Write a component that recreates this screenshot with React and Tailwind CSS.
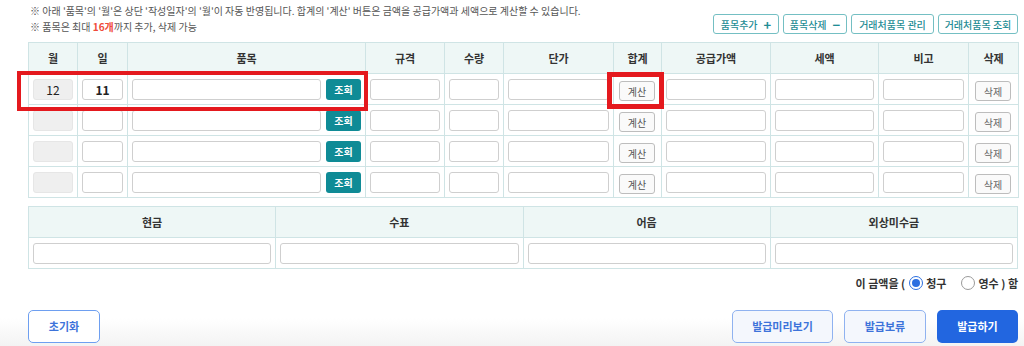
const rows = [
  { month: '12', day: '11' },
  { month: '', day: '' },
  { month: '', day: '' },
  { month: '', day: '' },
]

const headers = ['월', '일', '품목', '규격', '수량', '단가', '합계', '공급가액', '세액', '비고', '삭제']
const widths = [49, 50, 238, 79, 59, 110, 48, 109, 108, 90, 50]

function Input({ className = '', value = '' }) {
  return (
    <div
      className={
        'h-[21px] rounded-[3px] border border-[#cfcfcf] bg-white text-center text-[12px] font-bold leading-[19px] text-[#222] ' +
        className
      }
    >
      {value}
    </div>
  )
}

function TopButton({ children, className = '' }) {
  return (
    <button
      className={
        'flex h-[20px] items-center justify-center gap-[6px] rounded-[3px] border border-[#74bfc3] bg-white text-[10px] font-medium text-[#1f8d95] ' +
        className
      }
    >
      {children}
    </button>
  )
}

export default function App() {
  return (
    <div className="relative h-[346px] w-[1024px] overflow-hidden bg-gradient-to-b from-white from-[92%] to-[#f3f3f3] font-['Noto_Sans_CJK_KR',sans-serif] text-[#333]">
      <div className="pl-[28px] pr-[6px]">
        <div className="flex items-end justify-between pt-[3px]">
          <div className="text-[10px] leading-[16px] text-[#555]">
            <p className="pl-[2px]">
              ※ 아래 '품목'의 '월'은 상단 '작성일자'의 '월'이 자동 반영됩니다. 합계의 '계산' 버튼은 금액을 공급가액과 세액으로 계산할 수 있습니다.
            </p>
            <p className="pl-[2px]">
              ※ 품목은 최대 <span className="font-bold text-[#ef4b3a]">16개</span>까지 추가, 삭제 가능
            </p>
          </div>
          <div className="mb-[1px] flex gap-[4px]">
            <TopButton className="w-[66px]">
              품목추가 <span className="text-[13px] font-bold leading-none">+</span>
            </TopButton>
            <TopButton className="w-[64px]">
              품목삭제 <span className="text-[13px] font-bold leading-none">−</span>
            </TopButton>
            <TopButton className="w-[83px]">거래처품목 관리</TopButton>
            <TopButton className="w-[80px]">거래처품목 조회</TopButton>
          </div>
        </div>

        <table className="mt-[7px] w-[990px] table-fixed border-collapse">
          <colgroup>
            {widths.map((w, i) => (
              <col key={i} style={{ width: w }} />
            ))}
          </colgroup>
          <thead>
            <tr className="h-[31px] bg-[#eef7f6]">
              {headers.map((h) => (
                <th key={h} className="border border-[#cfe4e5] p-0 text-[11px] font-bold text-[#333]">
                  {h}
                </th>
              ))}
            </tr>
          </thead>
          <tbody>
            {rows.map((r, i) => (
              <tr key={i} className="h-[31px]">
                <td className="border border-[#cfe4e5] px-[4px]">
                  <Input className="!border-[#e6e6e6] !bg-[#efefef] font-normal" value={r.month} />
                </td>
                <td className="border border-[#cfe4e5] px-[4px]">
                  <Input value={r.day} />
                </td>
                <td className="border border-[#cfe4e5] px-[4px]">
                  <div className="flex gap-[5px]">
                    <Input className="flex-1" />
                    <button className="h-[21px] w-[35px] rounded-[3px] bg-[#0f8b96] text-[10px] font-bold text-white">
                      조회
                    </button>
                  </div>
                </td>
                <td className="border border-[#cfe4e5] px-[4px]">
                  <Input />
                </td>
                <td className="border border-[#cfe4e5] px-[4px]">
                  <Input />
                </td>
                <td className="border border-[#cfe4e5] px-[4px]">
                  <Input />
                </td>
                <td className="border border-[#cfe4e5] px-[5px]">
                  <button className="h-[20px] w-[36px] rounded-[3px] border border-[#bdbdbd] bg-[#fafafa] text-[10px] text-[#555]">
                    계산
                  </button>
                </td>
                <td className="border border-[#cfe4e5] px-[4px]">
                  <Input />
                </td>
                <td className="border border-[#cfe4e5] px-[4px]">
                  <Input />
                </td>
                <td className="border border-[#cfe4e5] px-[4px]">
                  <Input />
                </td>
                <td className="border border-[#cfe4e5] px-[6px]">
                  <button className="h-[20px] w-[36px] rounded-[3px] border border-[#bdbdbd] bg-[#fafafa] text-[10px] text-[#666]">
                    삭제
                  </button>
                </td>
              </tr>
            ))}
          </tbody>
        </table>

        <table className="mt-[8px] w-[990px] table-fixed border-collapse">
          <thead>
            <tr className="h-[31px] bg-[#eef7f6]">
              {['현금', '수표', '어음', '외상미수금'].map((h) => (
                <th key={h} className="border border-[#cfe4e5] p-0 text-[11px] font-bold text-[#333]">
                  {h}
                </th>
              ))}
            </tr>
          </thead>
          <tbody>
            <tr className="h-[31px]">
              {[0, 1, 2, 3].map((i) => (
                <td key={i} className="border border-[#cfe4e5] px-[4px]">
                  <Input />
                </td>
              ))}
            </tr>
          </tbody>
        </table>

        <div className="mt-[6px] flex items-center justify-end text-[11px] font-semibold text-[#333]">
          <span>이 금액을 (</span>
          <span className="ml-[4px] flex h-[14px] w-[14px] items-center justify-center rounded-full border border-[#2c6fe0] bg-white">
            <span className="h-[8px] w-[8px] rounded-full bg-[#2c6fe0]" />
          </span>
          <span className="ml-[3px]">청구</span>
          <span className="ml-[15px] h-[14px] w-[14px] rounded-full border border-[#9a9a9a] bg-white" />
          <span className="ml-[3px]">영수 ) 함</span>
        </div>

        <div className="mt-[18px] flex items-center">
          <button className="h-[33px] w-[72px] rounded-[5px] border border-[#6e9ff0] bg-white text-[11px] font-bold text-[#3d73da]">
            초기화
          </button>
          <div className="ml-auto flex gap-[11px]">
            <button className="h-[33px] w-[101px] rounded-[5px] border border-[#8fb2f0] bg-[#f4f7fd] text-[11px] font-bold text-[#3d73da]">
              발급미리보기
            </button>
            <button className="h-[33px] w-[82px] rounded-[5px] border border-[#8fb2f0] bg-[#f4f7fd] text-[11px] font-bold text-[#3d73da]">
              발급보류
            </button>
            <button className="h-[33px] w-[81px] rounded-[5px] bg-[#2266e0] text-[11px] font-bold text-white">
              발급하기
            </button>
          </div>
        </div>
      </div>

      <div className="pointer-events-none absolute left-[17px] top-[71px] h-[40px] w-[351px] border-[4px] border-[#e4191e]" />
      <div className="pointer-events-none absolute left-[607px] top-[72px] h-[37px] w-[57px] border-[5px] border-[#e4191e]" />
    </div>
  )
}
